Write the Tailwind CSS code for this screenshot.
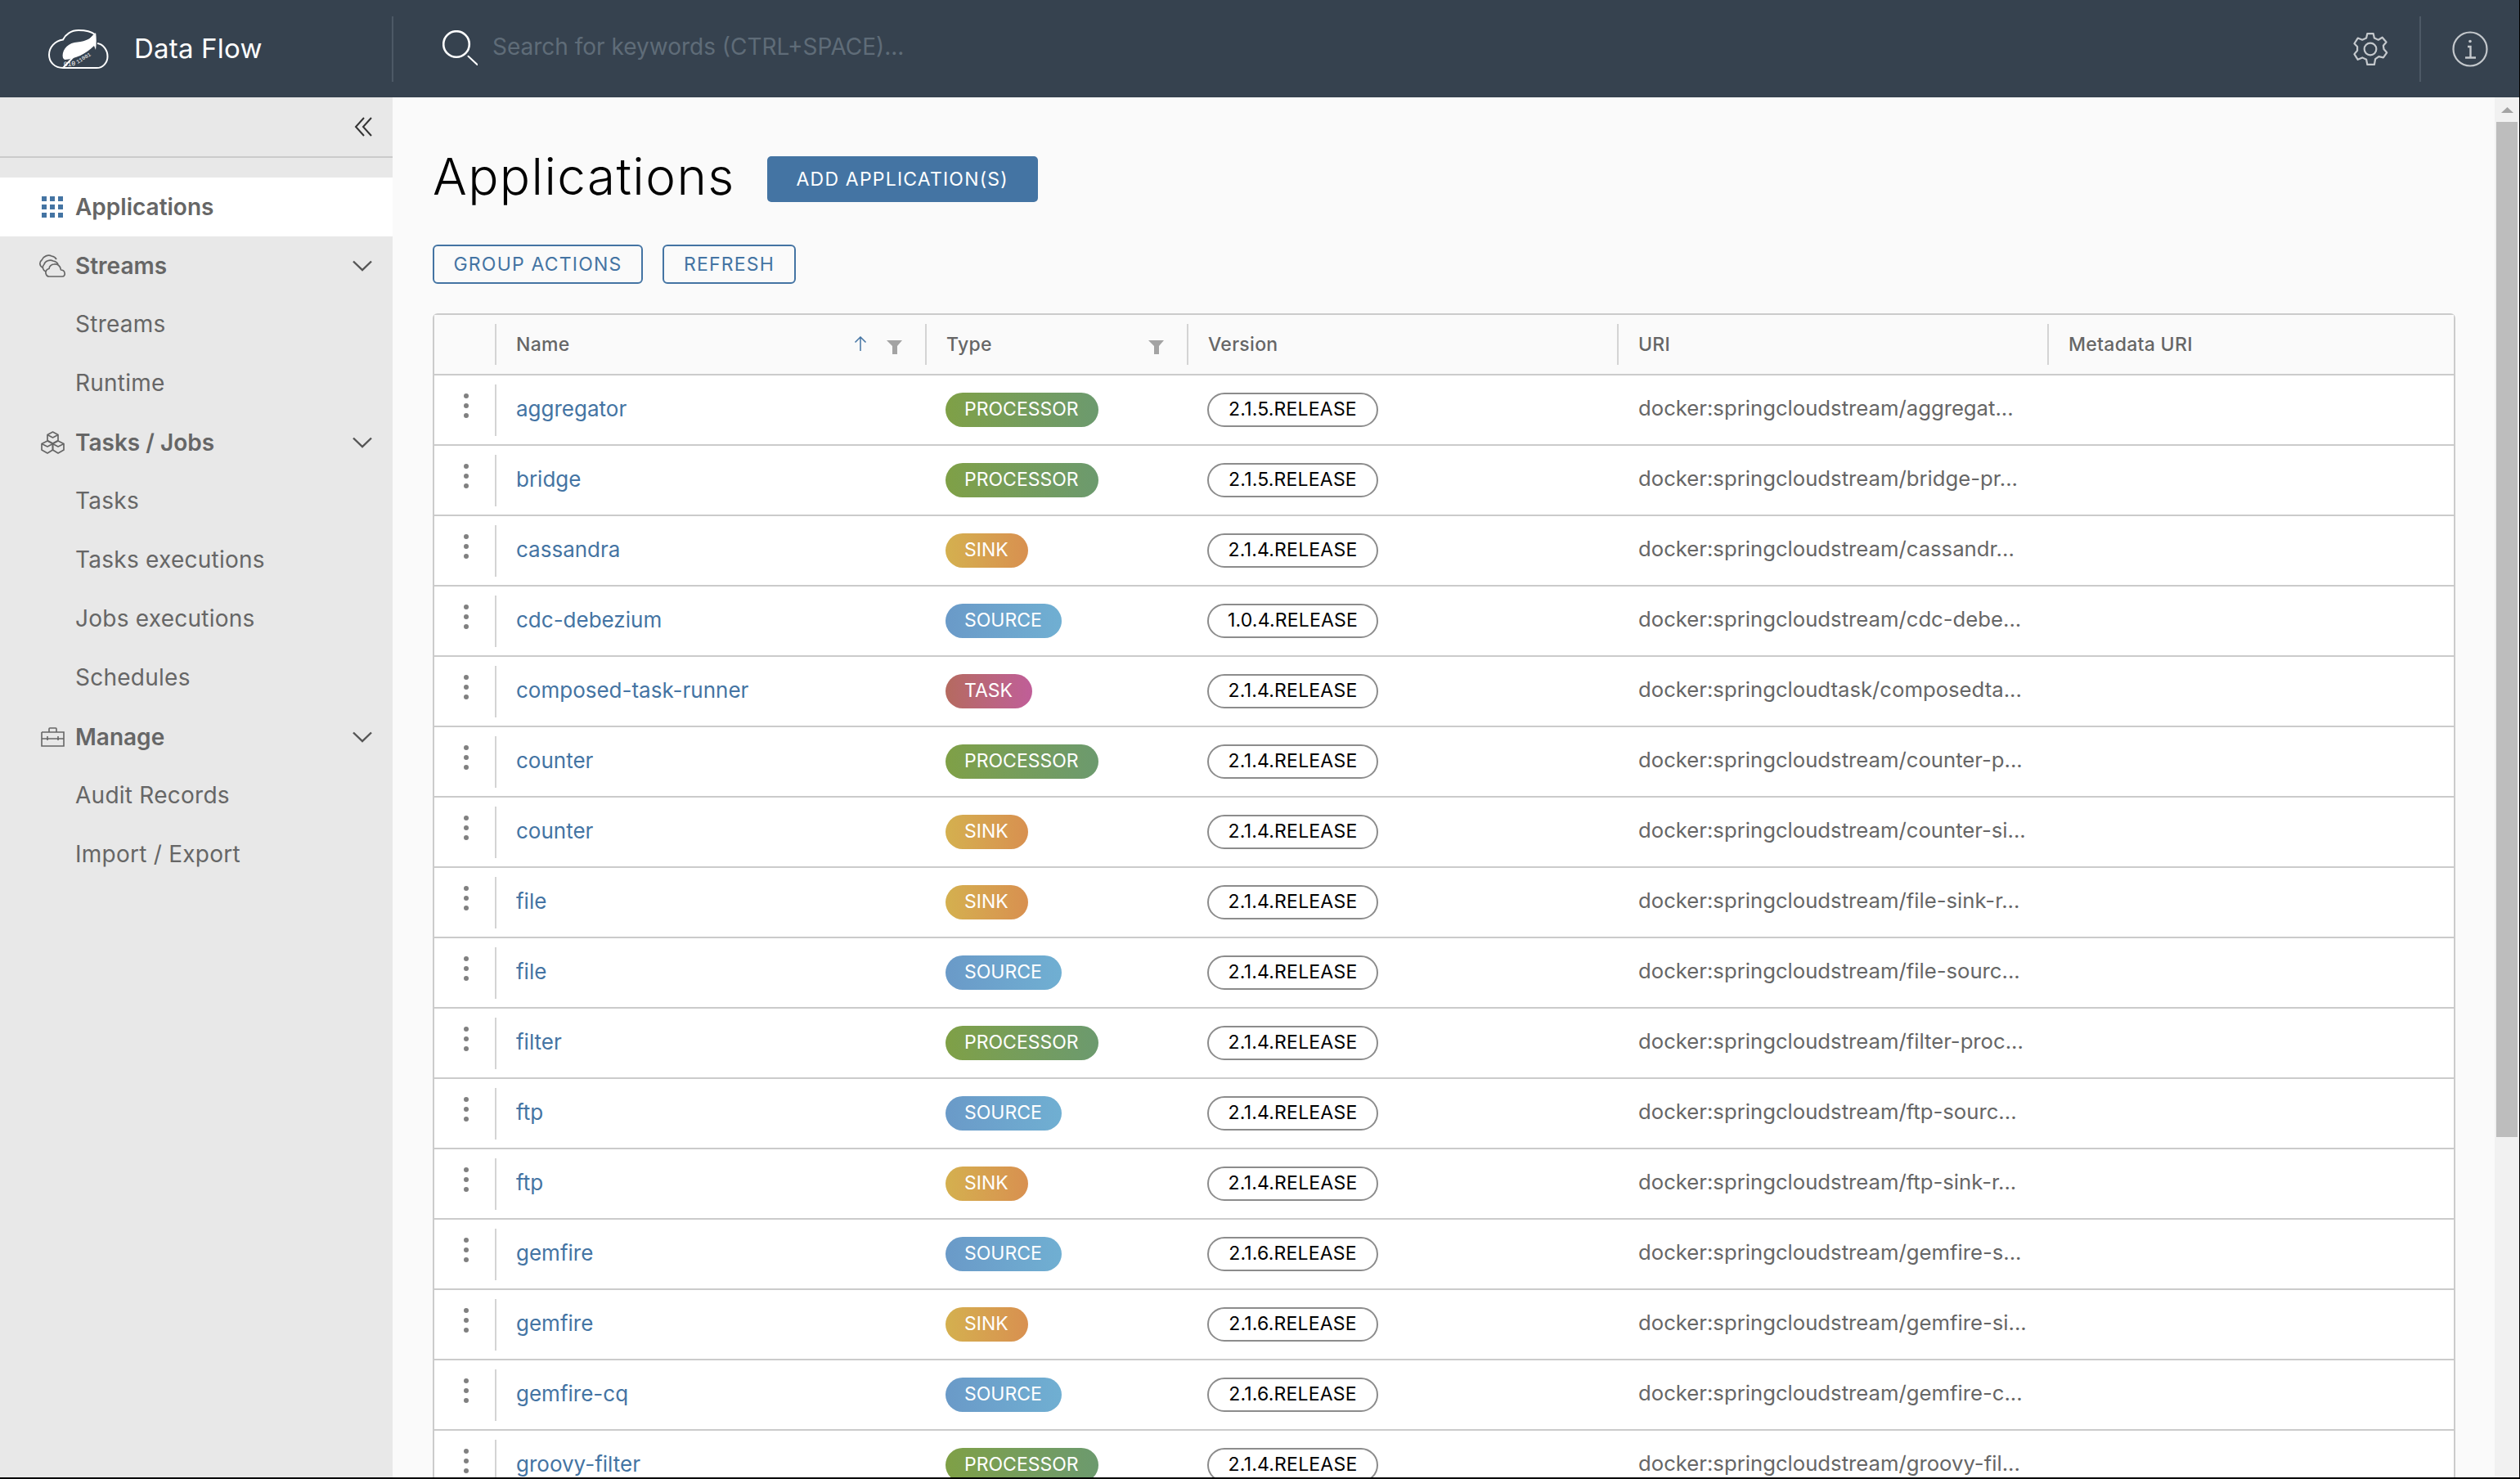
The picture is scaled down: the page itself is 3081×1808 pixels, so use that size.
<!DOCTYPE html>
<html lang="en">
<head>
  <meta charset="UTF-8">
  <title>Data Flow - Applications</title>
  <script src="https://cdn.jsdelivr.net/npm/@tailwindcss/browser@4"></script>
</head>
<body class="h-[1808px] w-[3081px] overflow-hidden bg-black font-['Inter','Liberation_Sans',sans-serif]">
<div class="h-[1806px] w-[3080px] overflow-hidden flex flex-col bg-[#fafafa]">

  <!-- top bar -->
  <header class="h-[119px] shrink-0 bg-[#36424f] flex items-center">
    <div class="w-[481px] h-[80px] shrink-0 flex items-center border-r-2 border-[#4d5966] pl-[59px]">
      <svg class="w-[74px] h-[48px]" viewBox="0 0 74 48" fill="none">
        <path d="M18 47H59C67 47 72.500 40.500 72.500 33C72.500 25 67 18 60 17M57 6C52 2 45 1 37 1C28 1 21 6 18 12.500C8 14 1 22 1 31C1 40 8 47 18 47Z" stroke="white" stroke-width="2"/>
        <path d="M58 4C52 13 42 15 32 16C22 18 16 27 18 35L20 37C33 36 46 30 56 20L58 25C59 17 59 10 58 4Z" fill="white"/>
        <text x="19" y="45" font-size="8" font-family="Liberation Mono" fill="white" transform="rotate(-4 19 45)">010</text>
        <text x="36" y="42" font-size="6.500" font-family="Liberation Mono" fill="white" transform="rotate(-32 36 42)">11001</text>
      </svg>
      <span class="ml-[31px] text-[33px] tracking-[0.2px] text-white">Data Flow</span>
    </div>
    <div class="flex-1 flex items-center pl-[60px]">
      <svg class="w-[43px] h-[43px] mt-[-2px] text-white" viewBox="0 0 43 43" fill="none" stroke="currentColor">
        <circle cx="17" cy="17" r="15.800" stroke-width="2.600"/>
        <path d="M31.500 31.700L42.500 42" stroke-width="2" stroke-linecap="round"/>
      </svg>
      <span class="ml-[18px] mb-[5px] text-[28px] text-[#5f6c78]">Search for keywords (CTRL+SPACE)...</span>
    </div>
    <svg class="w-[44px] h-[44px] text-[#c4c8cc]" viewBox="0 0 36 36" fill="none" stroke="currentColor" stroke-width="1.800" stroke-linejoin="round">
      <circle cx="18" cy="18" r="6"/>
      <path d="M15 2.500H21L22 7L26 8.800L30 6.300L34 11L31 14.500L31.500 18L34.500 21.500L31 26.500L26.500 25.500L23 28L22 33.500H15L14 28.500L10 26.500L5.500 28.500L2 23L5 19.500V15.500L2 12.500L5.500 7L10 8.800L14 7Z"/>
    </svg>
    <div class="ml-[38px] mr-[38px] w-[2px] h-[80px] bg-[#4d5966]"></div>
    <svg class="w-[44px] h-[44px] text-[#c4c8cc] mr-[38px]" viewBox="0 0 44 44" fill="none" stroke="currentColor" stroke-width="2.200">
      <circle cx="22" cy="22" r="20.500"/>
      <path d="M19 19H22.500V32M16 32.500H29" stroke-width="2.400"/>
      <circle cx="22" cy="12.500" r="1.800" fill="currentColor" stroke="none"/>
    </svg>
  </header>

  <div class="flex-1 flex min-h-0">

    <!-- side nav -->
    <nav class="w-[480px] shrink-0 bg-[#e8e8e8] text-[#666] text-[28px]">
      <div class="h-[74px] flex items-center justify-end pr-[25px] border-b-2 border-[#cbcbcb]">
        <svg class="w-[22px] h-[24px]" viewBox="0 0 22 24" fill="none" stroke="#333" stroke-width="2"><path d="M12 1L2 12L12 23M21 1L11 12L21 23"/></svg>
      </div>
      <a class="mt-[24px] h-[72px] bg-white flex items-center pl-[51px] font-semibold">
        <svg class="w-[26px] h-[26px] mr-[15px]" viewBox="0 0 26 26" fill="#4474a3">
          <rect width="6" height="6"/><rect x="10" width="6" height="6"/><rect x="20" width="6" height="6"/>
          <rect y="10" width="6" height="6"/><rect x="10" y="10" width="6" height="6"/><rect x="20" y="10" width="6" height="6"/>
          <rect y="20" width="6" height="6"/><rect x="10" y="20" width="6" height="6"/><rect x="20" y="20" width="6" height="6"/>
        </svg>
        Applications
      </a>
      <a class="h-[72px] flex items-center pl-[48px] pr-[25px] font-semibold">
        <svg class="w-[32px] h-[28px] mr-[12px]" viewBox="0 0 32 28" fill="none" stroke="#666" stroke-width="1.700" stroke-linejoin="round">
          <path d="M12 27H28C31 27 31.500 24 31 22.500C30.500 20 28 19 26.500 19C26 14 22 11 18 12C14.500 12 12 15 12 17.500C9 18 7.500 20.500 8 23C8.500 25.500 10 27 12 27Z"/>
          <path d="M8 21C4 19 3 15 6 12C7 8 13 6 17 8C20 8.500 22 10 23 12"/>
          <path d="M4 16C0 14 0 9 3 7C5 2 11 0 15 2C18 2.500 20 4 21 6"/>
        </svg>
        Streams
        <svg class="ml-auto w-[24px] h-[14px]" viewBox="0 0 24 14" fill="none" stroke="#555" stroke-width="2.400"><path d="M1 1.500L12 12L23 1.500"/></svg>
      </a>
      <a class="h-[72px] pb-[2px] flex items-center pl-[92px] tracking-[0.25px]">Streams</a>
      <a class="h-[72px] pb-[2px] flex items-center pl-[92px] tracking-[0.25px]">Runtime</a>
      <a class="h-[72px] flex items-center pl-[50px] pr-[25px] font-semibold">
        <svg class="w-[29px] h-[28px] mr-[13px]" viewBox="0 0 29 28" fill="none" stroke="#666" stroke-width="1.700" stroke-linejoin="round">
          <path d="M14.500 1L21 4.500V11.500L14.500 15L8 11.500V4.500Z M8 4.500L14.500 8L21 4.500"/>
          <path d="M8 12L14.500 15.500V23L8 27L1 23V15.500Z M1 15.500L8 19L14.500 15.500"/>
          <path d="M21 12L28 15.500V23L21 27L14.500 23V15.500Z M14.500 15.500L21 19L28 15.500"/>
        </svg>
        Tasks / Jobs
        <svg class="ml-auto w-[24px] h-[14px]" viewBox="0 0 24 14" fill="none" stroke="#555" stroke-width="2.400"><path d="M1 1.500L12 12L23 1.500"/></svg>
      </a>
      <a class="h-[72px] pb-[2px] flex items-center pl-[92px] tracking-[0.25px]">Tasks</a>
      <a class="h-[72px] pb-[2px] flex items-center pl-[92px] tracking-[0.25px]">Tasks executions</a>
      <a class="h-[72px] pb-[2px] flex items-center pl-[92px] tracking-[0.25px]">Jobs executions</a>
      <a class="h-[72px] pb-[2px] flex items-center pl-[92px] tracking-[0.25px]">Schedules</a>
      <a class="h-[72px] flex items-center pl-[50px] pr-[25px] font-semibold">
        <svg class="w-[29px] h-[24px] mr-[13px]" viewBox="0 0 29 24" fill="none" stroke="#666" stroke-width="1.600">
          <path d="M10 6V2C10 1.500 10.500 1 11 1H18C18.500 1 19 1.500 19 2V6"/>
          <path d="M1 6H28V14H21M8 14H1V6 M1 14V23H28V14 M8 11V16 M21 11V16 M8 14H21"/>
        </svg>
        Manage
        <svg class="ml-auto w-[24px] h-[14px]" viewBox="0 0 24 14" fill="none" stroke="#555" stroke-width="2.400"><path d="M1 1.500L12 12L23 1.500"/></svg>
      </a>
      <a class="h-[72px] pb-[2px] flex items-center pl-[92px] tracking-[0.25px]">Audit Records</a>
      <a class="h-[72px] pb-[2px] flex items-center pl-[92px] tracking-[0.25px]">Import / Export</a>
    </nav>

    <!-- main content -->
    <main class="flex-1 min-w-0 overflow-hidden pl-[49px] pr-[48px]">
      <div class="mt-[65px] h-[70px] flex items-center">
        <h1 class="mb-[6px] text-[62px] font-light text-black leading-none tracking-[1.400px]">Applications</h1>
        <button class="ml-[39px] h-[56px] w-[331px] bg-[#4474a3] text-white text-[23px] tracking-[1.200px] rounded-[5px]">ADD APPLICATION(S)</button>
      </div>
      <div class="mt-[45px] flex gap-[24px]">
        <button class="h-[48px] w-[257px] border-2 border-[#4474a3] text-[#4474a3] text-[23px] tracking-[1.200px] rounded-[6px]">GROUP ACTIONS</button>
        <button class="h-[48px] w-[163px] border-2 border-[#4474a3] text-[#4474a3] text-[23px] tracking-[1.200px] rounded-[6px]">REFRESH</button>
      </div>

      <div class="mt-[36px] border-2 border-[#cbcbcb] rounded-t-[6px] bg-white">
        <div class="grid grid-cols-[74px_526px_320px_526px_526px_1fr] h-[74px] items-center bg-[#fafafa] text-[23px] tracking-[0.3px] font-medium text-[#666] border-b-2 border-[#cbcbcb]">
          <div></div>
          <div class="h-[50px] border-l-2 border-[#d4d4d4] pl-[24px] pr-[28px] flex items-center">
            Name
            <svg class="ml-auto w-[16px] h-[18px] mt-[-2px]" viewBox="0 0 16 18" fill="none" stroke="#4474a3" stroke-width="1.500"><path d="M8 18V1M1.500 7.500L8 1L14.500 7.500"/></svg>
            <svg class="ml-[24px] w-[19px] h-[17px] mt-[6px]" viewBox="0 0 19 17" fill="#a3a3a3"><path d="M0 0H19L13 7V17H7V7Z"/></svg>
          </div>
          <div class="h-[50px] border-l-2 border-[#d4d4d4] pl-[24px] pr-[28px] flex items-center">
            Type
            <svg class="ml-auto w-[19px] h-[17px] mt-[6px]" viewBox="0 0 19 17" fill="#a3a3a3"><path d="M0 0H19L13 7V17H7V7Z"/></svg>
          </div>
          <div class="h-[50px] border-l-2 border-[#d4d4d4] pl-[24px] flex items-center">Version</div>
          <div class="h-[50px] border-l-2 border-[#d4d4d4] pl-[24px] flex items-center">URI</div>
          <div class="h-[50px] border-l-2 border-[#d4d4d4] pl-[24px] flex items-center">Metadata URI</div>
        </div>
        <div id="rows"></div>
      </div>
    </main>

    <!-- page scrollbar -->
    <div class="w-[30px] shrink-0 bg-[#f1f1f1] flex flex-col items-center">
      <svg class="mt-[12px] w-[15px] h-[7px]" viewBox="0 0 15 7" fill="#a3a3a3"><path d="M7.500 0L15 7H0Z"/></svg>
      <div class="mt-[11px] w-[26px] h-[1241px] bg-[#bdbdbd]"></div>
    </div>
  </div>
</div>

  <template id="row">
    <div class="grid grid-cols-[74px_526px_320px_526px_526px_1fr] h-[86px] items-center border-b-2 border-[#cbcbcb]">
      <div class="pl-[4px] pb-[10px] flex flex-col items-center gap-[6px]">
        <span class="w-[6px] h-[6px] rounded-full bg-[#808080]"></span>
        <span class="w-[6px] h-[6px] rounded-full bg-[#808080]"></span>
        <span class="w-[6px] h-[6px] rounded-full bg-[#808080]"></span>
      </div>
      <div class="h-[63px] pb-[4px] border-l-2 border-[#d4d4d4] pl-[24px] flex items-center text-[26px] text-[#4474a3]" data-name></div>
      <div class="pl-[25px]"><span class="inline-flex h-[42px] items-center rounded-[21px] pl-[23px] pr-[24px] pb-[2px] text-[23px] text-white" data-type></span></div>
      <div class="pl-[25px]"><span class="inline-flex h-[42px] w-[209px] pb-[2px] justify-center items-center rounded-[21px] border-2 border-[#8c8c8c] bg-white text-[23px] tracking-[0.2px] text-black" data-version></span></div>
      <div class="pl-[26px] pb-[4px] text-[25.700px] text-[#666]" data-uri></div>
      <div></div>
    </div>
  </template>

  <script>
    var typeClass = {
      PROCESSOR: "bg-linear-to-r from-[#7fa046] to-[#6c9a6e]",
      SINK: "bg-linear-to-r from-[#d4b04f] to-[#d89050]",
      SOURCE: "bg-linear-to-r from-[#6a9ac8] to-[#70afd2]",
      TASK: "bg-linear-to-r from-[#b56a5f] to-[#c05e98]"
    };
    var apps = [
      ["aggregator", "PROCESSOR", "2.1.5.RELEASE", "docker:springcloudstream/aggregat..."],
      ["bridge", "PROCESSOR", "2.1.5.RELEASE", "docker:springcloudstream/bridge-pr..."],
      ["cassandra", "SINK", "2.1.4.RELEASE", "docker:springcloudstream/cassandr..."],
      ["cdc-debezium", "SOURCE", "1.0.4.RELEASE", "docker:springcloudstream/cdc-debe..."],
      ["composed-task-runner", "TASK", "2.1.4.RELEASE", "docker:springcloudtask/composedta..."],
      ["counter", "PROCESSOR", "2.1.4.RELEASE", "docker:springcloudstream/counter-p..."],
      ["counter", "SINK", "2.1.4.RELEASE", "docker:springcloudstream/counter-si..."],
      ["file", "SINK", "2.1.4.RELEASE", "docker:springcloudstream/file-sink-r..."],
      ["file", "SOURCE", "2.1.4.RELEASE", "docker:springcloudstream/file-sourc..."],
      ["filter", "PROCESSOR", "2.1.4.RELEASE", "docker:springcloudstream/filter-proc..."],
      ["ftp", "SOURCE", "2.1.4.RELEASE", "docker:springcloudstream/ftp-sourc..."],
      ["ftp", "SINK", "2.1.4.RELEASE", "docker:springcloudstream/ftp-sink-r..."],
      ["gemfire", "SOURCE", "2.1.6.RELEASE", "docker:springcloudstream/gemfire-s..."],
      ["gemfire", "SINK", "2.1.6.RELEASE", "docker:springcloudstream/gemfire-si..."],
      ["gemfire-cq", "SOURCE", "2.1.6.RELEASE", "docker:springcloudstream/gemfire-c..."],
      ["groovy-filter", "PROCESSOR", "2.1.4.RELEASE", "docker:springcloudstream/groovy-fil..."]
    ];
    var tpl = document.getElementById("row");
    var rows = document.getElementById("rows");
    apps.forEach(function (a) {
      var row = tpl.content.cloneNode(true);
      row.querySelector("[data-name]").textContent = a[0];
      var badge = row.querySelector("[data-type]");
      badge.textContent = a[1];
      badge.className += " " + typeClass[a[1]];
      row.querySelector("[data-version]").textContent = a[2];
      row.querySelector("[data-uri]").textContent = a[3];
      rows.appendChild(row);
    });
  </script>
</body>
</html>
